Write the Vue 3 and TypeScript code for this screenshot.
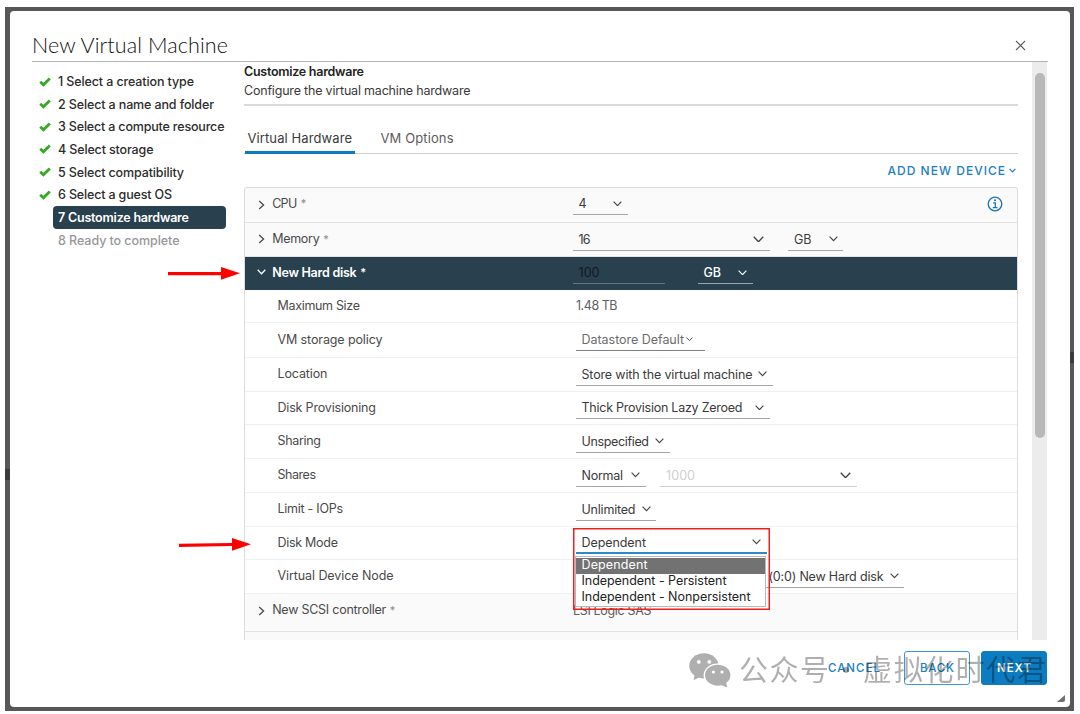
<script setup lang="ts">
import type { Directive } from 'vue'

interface Field {
  text: string
  textWidth: number
  width: number
  pad?: number
  gap?: number
  chevron?: number
  chevronRight?: number
  tone?: string
}

interface Row {
  label: string
  star?: boolean
  labelWidth: number
  height: number
  kind: 'top' | 'active' | 'sub'
  info?: boolean
  shift?: number
  fields: Field[]
}

// Tracks a run of text so that it spans the given width.
const vSpan: Directive<HTMLElement, number> = {
  mounted(el, binding) {
    const count = (el.textContent ?? '').trim().length
    if (count < 2) return
    const natural = el.getBoundingClientRect().width
    el.style.letterSpacing = `${(binding.value - natural) / (count - 1)}px`
    el.style.marginRight = `${-(binding.value - natural) / (count - 1)}px`
  },
}

const steps = [
  { text: '1 Select a creation type', width: 136, state: 'done' },
  { text: '2 Select a name and folder', width: 156, state: 'done' },
  { text: '3 Select a compute resource', width: 166.5, state: 'done' },
  { text: '4 Select storage', width: 95.5, state: 'done' },
  { text: '5 Select compatibility', width: 126, state: 'done' },
  { text: '6 Select a guest OS', width: 114, state: 'done' },
  { text: '7 Customize hardware', width: 131, state: 'current' },
  { text: '8 Ready to complete', width: 121.5, state: 'todo' },
]

const rows: Row[] = [
  { label: 'CPU', star: true, labelWidth: 25, height: 35, kind: 'top', info: true, shift: -1.5, fields: [
    { text: '4', textWidth: 7.5, width: 55, chevron: 9 },
  ] },
  { label: 'Memory', star: true, labelWidth: 47.5, height: 34, kind: 'top', fields: [
    { text: '16', textWidth: 12, width: 197, chevron: 11, chevronRight: 6 },
    { text: 'GB', textWidth: 17.5, width: 55, gap: 18.5, chevron: 9 },
  ] },
  { label: 'New Hard disk', star: true, labelWidth: 84.5, height: 33, kind: 'active', fields: [
    { text: '100', textWidth: 21, width: 92, tone: 'ghost' },
    { text: 'GB', textWidth: 17.5, width: 55.5, gap: 33, chevron: 9, chevronRight: 6 },
  ] },
  { label: 'Maximum Size', labelWidth: 82.5, height: 33, kind: 'sub', fields: [
    { text: '1.48 TB', textWidth: 41.5, width: 60, pad: 0.5, tone: 'plain' },
  ] },
  { label: 'VM storage policy', labelWidth: 105, height: 35, kind: 'sub', fields: [
    { text: 'Datastore Default', textWidth: 102.5, width: 129.5, chevron: 7, chevronRight: 12, tone: 'muted' },
  ] },
  { label: 'Location', labelWidth: 50, height: 34, kind: 'sub', fields: [
    { text: 'Store with the virtual machine', textWidth: 171, width: 197, chevron: 9 },
  ] },
  { label: 'Disk Provisioning', labelWidth: 98.5, height: 33, kind: 'sub', fields: [
    { text: 'Thick Provision Lazy Zeroed', textWidth: 161, width: 194, chevron: 9 },
  ] },
  { label: 'Sharing', labelWidth: 43.5, height: 34, kind: 'sub', fields: [
    { text: 'Unspecified', textWidth: 67.5, width: 94, chevron: 9 },
  ] },
  { label: 'Shares', labelWidth: 38.5, height: 34, kind: 'sub', fields: [
    { text: 'Normal', textWidth: 41.5, width: 70, chevron: 9 },
    { text: '1000', textWidth: 29, width: 197, gap: 14.5, chevron: 11, chevronRight: 6.5, tone: 'disabled' },
  ] },
  { label: 'Limit - IOPs', labelWidth: 65.5, height: 34, kind: 'sub', fields: [
    { text: 'Unlimited', textWidth: 54, width: 80.5, chevron: 9 },
  ] },
  { label: 'Disk Mode', labelWidth: 60.5, height: 33, kind: 'sub', fields: [
    { text: 'Dependent', textWidth: 64.5, width: 191, chevron: 9, chevronRight: 5.5, tone: 'focus' },
  ] },
  { label: 'Virtual Device Node', labelWidth: 116, height: 34, kind: 'sub', fields: [
    { text: '(0:0) New Hard disk', textWidth: 115, width: 144, gap: 184.5, pad: 8.5, chevron: 9 },
  ] },
  { label: 'New SCSI controller', star: true, labelWidth: 114, height: 38, kind: 'top', shift: -2.5, fields: [
    { text: 'LSI Logic SAS', textWidth: 78.5, width: 90, pad: 0.5, tone: 'plain' },
  ] },
]

const options = [
  { text: 'Dependent', width: 66 },
  { text: 'Independent - Persistent', width: 145 },
  { text: 'Independent - Nonpersistent', width: 169 },
]
</script>

<template>
  <div class="backdrop">
    <i class="seam seam-left"></i>
    <i class="seam seam-right"></i>
    <section class="dialog">
      <header class="head">
        <h1><span v-span="196">New Virtual Machine</span></h1>
        <svg class="close" width="11" height="11" viewBox="0 0 11 11"><path d="M1 1l9 9M10 1l-9 9" /></svg>
      </header>

      <div class="body">
        <nav class="steps">
          <div v-for="s in steps" :key="s.text" class="step" :class="s.state">
            <svg v-if="s.state === 'done'" class="check" width="12" height="10" viewBox="0 0 12 10">
              <path d="M1.2 4.8L4.4 7.8L10.8 1.6" />
            </svg>
            <span class="step-name"><span v-span="s.width">{{ s.text }}</span></span>
          </div>
        </nav>

        <main class="main">
          <h2><span v-span="120">Customize hardware</span></h2>
          <p class="sub-title"><span v-span="226.5">Configure the virtual machine hardware</span></p>
          <div class="tabs">
            <div class="tab on"><span v-span="104.5">Virtual Hardware</span></div>
            <div class="tab"><span v-span="73">VM Options</span></div>
          </div>
          <div class="tools">
            <span v-span="117.5">ADD NEW DEVICE</span>
            <svg width="7" height="5" viewBox="0 0 7 5"><path d="M.6 .8L3.5 3.8L6.4 .8" /></svg>
          </div>
          <div class="list">
            <div v-for="r in rows" :key="r.label" class="row" :class="r.kind" :style="{ height: r.height + 'px' }">
              <div class="row-in" :style="{ marginTop: (r.shift ?? -0.5) * 2 + 'px' }">
                <div class="label">
                  <svg v-if="r.kind === 'top'" class="caret" :class="{ low: r.shift }" width="7" height="10" viewBox="0 0 7 10"><path d="M1.2 .9L5.6 5L1.2 9.1" /></svg>
                  <svg v-if="r.kind === 'active'" class="caret wide" width="9" height="6" viewBox="0 0 9 6"><path d="M.7 .8L4.5 4.8L8.3 .8" /></svg>
                  <span v-span="r.labelWidth">{{ r.label }}</span>
                  <span v-if="r.star" class="star">*</span>
                </div>
                <div
                  v-for="(f, i) in r.fields"
                  :key="i"
                  class="field"
                  :class="f.tone"
                  :style="{ width: f.width + 'px', marginLeft: (f.gap ?? 0) + 'px', paddingLeft: (f.pad ?? 6) + 'px', paddingRight: (f.chevronRight ?? 5.5) + 'px' }"
                >
                  <span v-span="f.textWidth">{{ f.text }}</span>
                  <svg v-if="f.chevron" class="chev" :width="f.chevron" :height="f.chevron * 0.62" viewBox="0 0 9 5.6">
                    <path d="M.6 .7L4.5 4.7L8.4 .7" />
                  </svg>
                </div>
                <svg v-if="r.info" class="info" width="16" height="16" viewBox="0 0 16 16">
                  <circle cx="8" cy="8" r="6.8" />
                  <path d="M6.2 6.9H8.3V11.6M5.8 11.7H10.5" />
                  <circle class="dot" cx="8" cy="4.3" r="1.05" />
                </svg>
              </div>
            </div>
            <div class="row top tail"></div>
          </div>
        </main>

        <div class="track"><div class="thumb"></div></div>
      </div>

      <footer class="foot">
        <span class="cancel"><span v-span="52">CANCEL</span></span>
        <span class="btn back"><span v-span="34">BACK</span></span>
        <span class="btn next"><span v-span="34">NEXT</span></span>
      </footer>
      <svg class="grip" width="8" height="8" viewBox="0 0 8 8"><path d="M8 0V5Q8 7 6 7H0Z" /></svg>
    </section>
  </div>

  <ul class="menu">
    <li v-for="(o, i) in options" :key="o.text" :class="{ picked: i === 0 }"><span v-span="o.width">{{ o.text }}</span></li>
  </ul>
  <div class="frame"></div>

  <svg class="arrow first" width="72" height="14" viewBox="0 0 72 14">
    <path d="M0 5H53V0L72 6.3L53 12.8V8.3H0Z" />
  </svg>
  <svg class="arrow second" width="72" height="14" viewBox="0 0 72 14">
    <path d="M0 5.8L53 4.9V0L72 6.2L53 12.7V8.1L0 8.9Z" />
  </svg>

  <div class="stamp">
    <svg class="bubbles" width="42" height="35" viewBox="0 0 42 35">
      <defs>
        <mask id="cut">
          <rect width="42" height="35" fill="#fff" />
          <ellipse cx="28.6" cy="22.2" rx="14" ry="11.7" fill="#000" />
          <circle cx="9.8" cy="8.8" r="1.9" fill="#000" />
          <circle cx="20.3" cy="8.8" r="1.9" fill="#000" />
        </mask>
        <mask id="eyes">
          <rect width="42" height="35" fill="#fff" />
          <circle cx="24.4" cy="19" r="1.6" fill="#000" />
          <circle cx="33" cy="19" r="1.6" fill="#000" />
        </mask>
      </defs>
      <g mask="url(#cut)">
        <ellipse cx="14.9" cy="12.8" rx="14.7" ry="12.6" />
        <path d="M5.5 21.5L4.5 27.3L11 24Z" />
      </g>
      <g mask="url(#eyes)">
        <ellipse cx="28.7" cy="22.2" rx="12.7" ry="10.5" />
        <path d="M32 32L38.3 34.6L37 29Z" />
      </g>
    </svg>
    <span class="stamp-a" v-span="90">公众号</span>
    <span class="stamp-dot">·</span>
    <span class="stamp-b" v-span="183">虚拟化时代君</span>
  </div>
</template>

<style>
body {
  margin: 0;
  background: #fff;
  overflow: hidden;
}
#app {
  position: relative;
  width: 1080px;
  height: 714px;
  overflow: hidden;
}
</style>

<style scoped>
* {
  box-sizing: border-box;
}
.backdrop,
.menu,
.stamp {
  font-family: Inter, 'Noto Sans CJK SC', sans-serif;
  font-size: 12.5px;
  color: #4a4a4a;
  white-space: nowrap;
}
.backdrop {
  position: absolute;
  left: 5px;
  top: 7px;
  width: 1069px;
  height: 704px;
  padding: 4px 4.5px 4px 5px;
  background: #575757;
}
.seam {
  position: absolute;
  width: 5px;
  height: 11px;
  background: #3b3b3b;
}
.seam-left {
  left: 0;
  top: 462px;
}
.seam-right {
  right: 0;
  top: 345px;
}
.dialog {
  position: relative;
  display: flex;
  flex-direction: column;
  height: 696px;
  padding: 0 22px;
  background: #fff;
  border-radius: 4px;
}
.head {
  display: flex;
  align-items: center;
  justify-content: space-between;
  height: 51px;
  padding-top: 17px;
  padding-right: 22px;
  border-bottom: 1px solid #b4b4b4;
}
h1,
h2,
p,
ul {
  margin: 0;
  padding: 0;
  list-style: none;
}
h1 {
  font-family: Lato, sans-serif;
  font-size: 21.5px;
  font-weight: 300;
  line-height: 26px;
  color: #111;
}
.close {
  margin-top: 2px;
  fill: none;
  stroke: #5c5c5c;
  stroke-width: 1.1;
}
.body {
  display: flex;
  height: 578px;
}
.steps {
  width: 212px;
  padding-top: 8.2px;
}
.step {
  display: flex;
  align-items: center;
  height: 22.65px;
  padding-left: 21px;
  font-weight: 500;
  color: #2c2c2c;
}
.step.done {
  padding-left: 7px;
}
.check {
  margin-right: 2px;
  fill: none;
  stroke: #35a824;
  stroke-width: 2.8;
}
.step-name {
  display: flex;
  align-items: center;
  width: 173px;
  height: 23px;
  padding-left: 5px;
}
.current .step-name {
  border-radius: 4px;
  background: #29404e;
  color: #fff;
  font-weight: 600;
}
.todo {
  color: #979797;
}
.main {
  width: 774px;
  overflow: hidden;
}
h2 {
  height: 19px;
  font-size: 12.5px;
  font-weight: 600;
  line-height: 19px;
  color: #222;
}
.sub-title {
  height: 25px;
  border-bottom: 2px solid #dadada;
  line-height: 19px;
  color: #3a3a3a;
}
.tabs {
  display: flex;
  gap: 23px;
  height: 48px;
  box-shadow: inset 0 -1px #cfcfcf;
  font-size: 13px;
}
.tab {
  display: flex;
  align-items: center;
  height: 48px;
  padding: 18px 3px 0;
  border-bottom: 3px solid transparent;
  color: #5c5c5c;
}
.tab.on {
  width: 110px;
  margin-left: 0.5px;
  border-color: #0d79c0;
  color: #3a3a3a;
}
.tools {
  display: flex;
  align-items: center;
  justify-content: flex-end;
  gap: 4px;
  height: 33px;
  padding-right: 2px;
  font-size: 12px;
  font-weight: 500;
  color: #1a80c2;
}
.tools svg {
  fill: none;
  stroke: #1a80c2;
  stroke-width: 1.2;
}
.list {
  height: 453px;
  overflow: hidden;
  border: 1px solid #dcdcdc;
  border-bottom: 0;
  border-radius: 3px 3px 0 0;
}
.row {
  display: flex;
  background: #fff;
  border-bottom: 1px solid #f0f0f0;
}
.row.top {
  background: #fafafa;
  border-color: #e2e2e2;
}
.row.active {
  background: #29404e;
  border-color: #29404e;
  color: #fff;
  font-weight: 500;
}
.row.tail {
  height: 10px;
}
.row-in {
  display: flex;
  flex: 1;
  align-items: center;
}
.label {
  display: flex;
  align-items: center;
  width: 327.5px;
  margin-top: -1px;
  padding-left: 13.2px;
}
.sub .label {
  width: 330.5px;
  padding-left: 32.5px;
}
.caret {
  width: 7px;
  margin-right: 7px;
  fill: none;
  stroke: #4a4a4a;
  stroke-width: 1.3;
}
.caret.low {
  position: relative;
  top: 1.5px;
}
.caret.wide {
  width: 9px;
  margin-left: -1px;
  margin-right: 6px;
  stroke: #fff;
}
.active .label {
  font-weight: 600;
}
.star {
  margin-left: 3.5px;
  font-size: 11px;
  color: #8a8a8a;
}
.active .star {
  color: #fff;
}
.field {
  display: flex;
  align-items: center;
  justify-content: space-between;
  height: 23px;
  padding-top: 1px;
  border-bottom: 1px solid #a6a6a6;
  color: #3a3a3a;
}
.chev {
  fill: none;
  stroke: #444;
  stroke-width: 1.15;
}
.active .field {
  border-bottom-color: #9aa5ac;
  color: #fff;
}
.active .chev {
  stroke: #fff;
}
.active .field.ghost {
  border-bottom-color: #65747d;
  color: #10191f;
  font-weight: 400;
}
.field.plain {
  border-color: transparent;
  color: #5e5e5e;
}
.field.muted {
  color: #6c6c6c;
  border-color: #808080;
}
.field.disabled {
  color: #cfcfcf;
  border-color: #cfcfcf;
}
.field.focus {
  border-bottom: 2px solid #2a8bc8;
}
.info {
  margin-left: 359px;
  fill: none;
  stroke: #1a74b8;
  stroke-width: 1.3;
}
.info .dot {
  fill: #1a74b8;
  stroke: none;
}
.track {
  width: 15px;
  height: 578px;
  margin-left: 14px;
  padding: 11px 2px 0 3px;
  background: #ececec;
}
.thumb {
  height: 365px;
  border-radius: 5px;
  background: #b8b8b8;
}
.foot {
  display: flex;
  align-items: center;
  justify-content: flex-end;
  height: 56px;
  padding-right: 0.5px;
  font-size: 11.5px;
  font-weight: 500;
  color: #1a80c2;
}
.cancel {
  margin-right: 24px;
}
.btn {
  display: flex;
  align-items: center;
  justify-content: center;
  width: 66px;
  height: 34px;
  border: 1px solid #3d97d0;
  border-radius: 3px;
}
.next {
  margin-left: 11px;
  border-color: #0c7bbf;
  background: #0c7bbf;
  color: #fff;
  font-weight: 600;
}
.grip {
  position: absolute;
  right: 5px;
  bottom: 4px;
  fill: #707070;
}
.menu {
  position: absolute;
  left: 575px;
  top: 556px;
  width: 191px;
  height: 51px;
  padding: 1px 0 0;
  border: 1px solid #b9b9b9;
  background: #fff;
  color: #222;
}
.menu li {
  height: 16px;
  padding-left: 5.5px;
  line-height: 14.5px;
}
.menu .picked {
  background: #727272;
  color: #fff;
}
.frame {
  position: absolute;
  left: 572.5px;
  top: 528px;
  width: 197px;
  height: 82px;
  border: 1px solid #f0201c;
  box-shadow: inset 0 0 0 0.5px #f0201c;
}
.arrow {
  position: absolute;
  fill: #fe0000;
}
.first {
  left: 168px;
  top: 267px;
}
.second {
  left: 179px;
  top: 538px;
}
.stamp {
  position: absolute;
  left: 689px;
  top: 648px;
  display: flex;
  align-items: center;
  height: 40px;
  font-size: 29px;
  font-weight: 400;
  line-height: 40px;
  color: #000;
  opacity: 0.31;
}
.bubbles {
  flex: none;
  position: relative;
  top: 2px;
}
.stamp-a,
.stamp-dot,
.stamp-b {
  display: inline-block;
  font-family: 'Noto Sans CJK SC', sans-serif;
}
.stamp-a {
  margin-left: 8px;
}
.stamp-dot {
  width: 34px;
  text-align: center;
}
</style>
